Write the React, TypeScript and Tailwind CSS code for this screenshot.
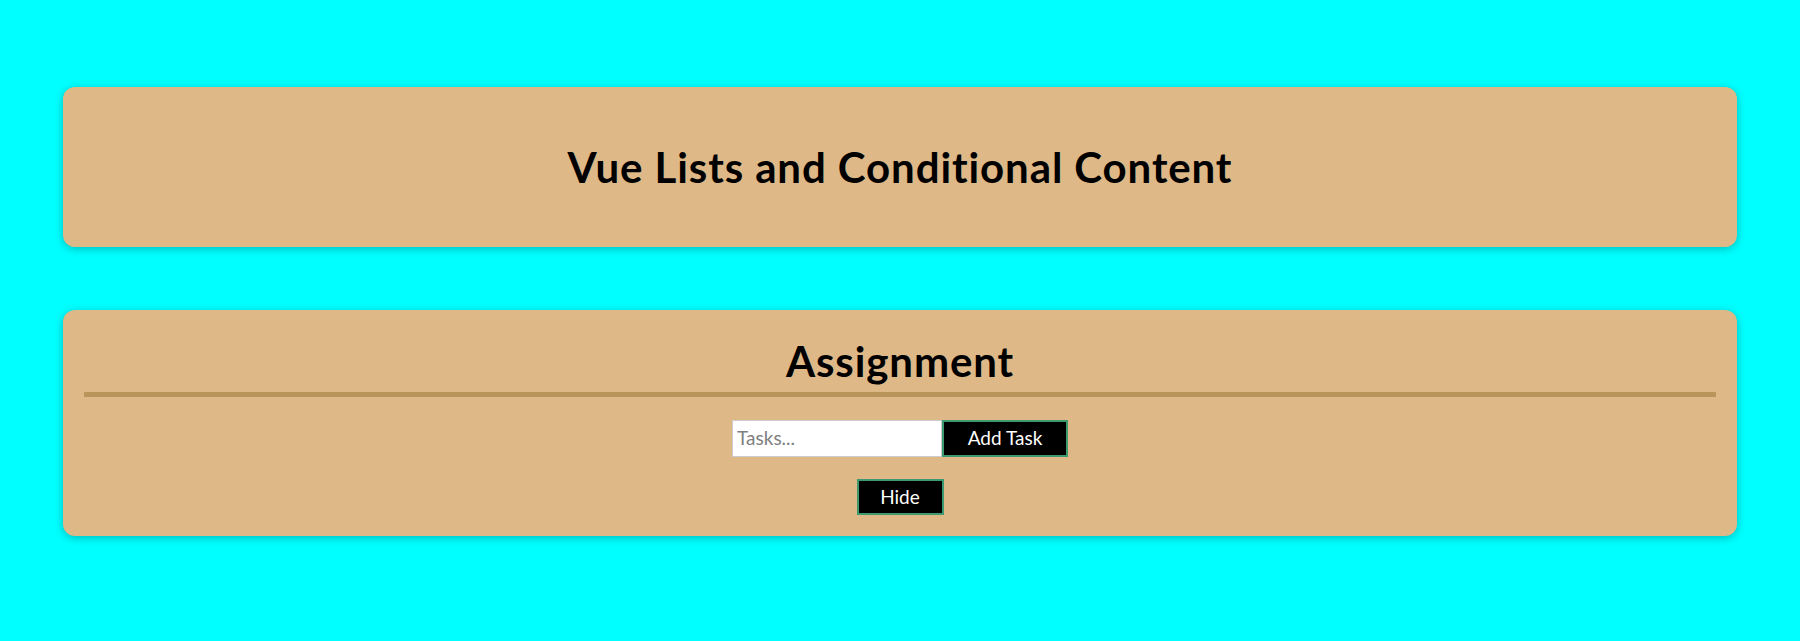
import React from "react";

export default function App() {
  return (
    <div
      className="min-h-[641px] bg-[#00ffff] pt-[87px]"
      style={{ fontFamily: "Lato, 'Noto Sans', sans-serif" }}
    >
      <header className="mx-[63px] flex h-[160px] items-center justify-center rounded-[12px] bg-[#deb887] shadow-[0_2px_8px_rgba(0,0,0,0.26)]">
        <h1 className="text-[42px] font-bold leading-[48px] tracking-[0.9px] text-black">
          Vue Lists and Conditional Content
        </h1>
      </header>

      <section className="mx-[63px] mt-[63px] h-[226px] rounded-[12px] bg-[#deb887] px-[21px] pt-[27px] pb-[21px] text-center shadow-[0_2px_8px_rgba(0,0,0,0.26)]">
        <h2 className="text-[42px] font-bold leading-[48px] tracking-[0.9px] text-black">
          Assignment
        </h2>
        <div className="mt-[7px] h-[5px] bg-[#b9945b]" />
        <div className="mt-[23px] flex h-[37px] items-stretch justify-center">
          <input
            type="text"
            placeholder="Tasks..."
            className="w-[210px] border border-[#cccccc] bg-white px-[4px] text-[19px] text-black outline-none placeholder:text-[#808080]"
          />
          <button className="w-[126px] border-2 border-[#3d9970] bg-black text-[19px] text-white">
            Add Task
          </button>
        </div>
        <div className="mt-[22px] flex justify-center">
          <button className="h-[36px] w-[87px] border-2 border-[#3d9970] bg-black text-[19px] text-white">
            Hide
          </button>
        </div>
      </section>
    </div>
  );
}
